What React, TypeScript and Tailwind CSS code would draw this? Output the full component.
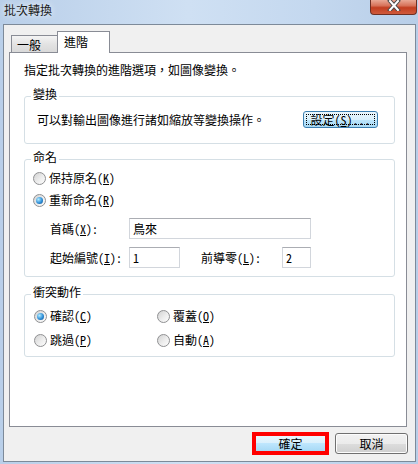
import type { ReactNode } from 'react';

function Radio({ checked }: { checked?: boolean }) {
  return (
    <span className="flex h-[13px] w-[13px] shrink-0 items-center justify-center rounded-full border border-[#8f9092] bg-[linear-gradient(135deg,#d2d2d2,#ededed_55%,#fdfdfd)]">
      {checked && (
        <span className="h-[7px] w-[7px] rounded-full bg-[radial-gradient(circle_at_35%_35%,#b3ecff,#2f8fd8_55%,#0c4a86)]" />
      )}
    </span>
  );
}

function RadioRow({ checked, children }: { checked?: boolean; children: ReactNode }) {
  return (
    <div className="flex h-[16px] items-center gap-[3px]">
      <Radio checked={checked} />
      <span>{children}</span>
    </div>
  );
}

function Group({ label, className, children }: { label: string; className?: string; children: ReactNode }) {
  return (
    <div className={'relative rounded-[3px] border border-[#d5dfe5] ' + (className ?? '')}>
      <span className="absolute -top-[10px] left-[6px] bg-white px-[2px] leading-[14px]">{label}</span>
      {children}
    </div>
  );
}

function Field({ value, className }: { value: string; className: string }) {
  return (
    <div className={'flex h-[21px] items-center border border-[#d2d6dc] border-t-[#abadb3] bg-white pl-[3px] ' + className}>
      {value}
    </div>
  );
}

export default function App() {
  return (
    <div className="flex h-[464px] w-[418px] flex-col overflow-hidden bg-[linear-gradient(90deg,#b9cfe9,#cfe0f3_45%,#c4d8ef_75%,#b8cee8)] pb-[2px] pl-[3px] pr-[2px] font-['Noto_Sans_CJK_TC','Noto_Sans',sans-serif] text-[12px] leading-[14px] text-black [font-feature-settings:'hwid']">
      {/* title bar */}
      <div className="flex h-[24px] shrink-0 items-start justify-between">
        <span className="pl-[1px] pt-[3px] text-[#1a1a1a] [text-shadow:0_0_6px_#ffffff]">批次轉換</span>
        <div className="-mr-[1px] flex h-[15px] w-[47px] items-center justify-center rounded-b-[4px] border border-t-0 border-[#6e2f23] bg-[linear-gradient(#e9a895,#d7735a_40%,#c23e20_55%,#cf5a3c)]">
          <svg width="14" height="11" viewBox="0 0 14 11" className="-mt-[3px]">
            <path d="M3 1 L11 10 M11 1 L3 10" stroke="#4a4a4a" strokeWidth="4" strokeLinecap="square" />
            <path d="M3 1 L11 10 M11 1 L3 10" stroke="#ffffff" strokeWidth="2" strokeLinecap="square" />
          </svg>
        </div>
      </div>

      {/* client area */}
      <div className="flex flex-1 flex-col border border-[#7d8a99] bg-[#f0f0f0] pt-[6px]">
        {/* tabs */}
        <div className="ml-[7px] flex h-[21px] items-end">
          <div className="h-[17px] w-[47px] border border-b-0 border-[#898c95] bg-[linear-gradient(#f4f4f4,#e3e3e3_50%,#d9d9d9)] pl-[5px] pt-[2px]">
            一般
          </div>
          <div className="relative z-10 -mb-[1px] -ml-[1px] h-[22px] w-[53px] border border-b-0 border-[#898c95] bg-white pl-[6px] pt-[3px]">
            進階
          </div>
        </div>

        {/* panel */}
        <div className="ml-[5px] h-[375px] w-[398px] border border-[#898c95] bg-white pl-[14px] pr-[11px] pt-[10px]">
          <p>指定批次轉換的進階選項，如圖像變換。</p>

          <Group label="變換" className="mt-[19px] pb-[15px] pl-[12px] pr-[16px] pt-[14px]">
            <div className="flex h-[17px] items-center">
              <span>可以對輸出圖像進行諸如縮放等變換操作。</span>
              <button
                type="button"
                className="relative ml-auto h-[17px] w-[75px] rounded-[3px] border border-[#3c7fb1] bg-[linear-gradient(#eaf6fd,#d9f0fc_50%,#bee6fd_50%,#a7d9f5)] leading-[14px]"
              >
                <span className="absolute inset-[2px] border border-dotted border-black" />
                設定(<u className="underline-offset-1">S</u>)...
              </button>
            </div>
          </Group>

          <Group label="命名" className="mt-[15px] pb-[8px] pl-[8px] pt-[10px]">
            <RadioRow>
              保持原名(<u>K</u>)
            </RadioRow>
            <div className="mt-[6px]">
              <RadioRow checked>
                重新命名(<u>R</u>)
              </RadioRow>
            </div>
            <div className="mt-[10px] flex items-center pl-[17px]">
              <span className="w-[79px]">
                首碼(<u>X</u>):
              </span>
              <Field value="鳥來" className="w-[182px]" />
            </div>
            <div className="mt-[8px] flex items-center pl-[17px]">
              <span className="w-[79px]">
                起始編號(<u>I</u>):
              </span>
              <Field value="1" className="w-[51px]" />
              <span className="ml-[21px] w-[81px]">
                前導零(<u>L</u>):
              </span>
              <Field value="2" className="w-[29px]" />
            </div>
          </Group>

          <Group label="衝突動作" className="mt-[17px] pb-[8px] pl-[9px] pt-[13px]">
            <div className="grid grid-cols-[123px_1fr] gap-y-[8px]">
              <RadioRow checked>
                確認(<u>C</u>)
              </RadioRow>
              <RadioRow>
                覆蓋(<u>O</u>)
              </RadioRow>
              <RadioRow>
                跳過(<u>P</u>)
              </RadioRow>
              <RadioRow>
                自動(<u>A</u>)
              </RadioRow>
            </div>
          </Group>
        </div>

        {/* buttons */}
        <div className="mt-[5px] flex h-[23px] items-center justify-end gap-[6px] pr-[7px]">
          <button
            type="button"
            className="h-[23px] w-[77px] border-[4px] border-[#ff0000] bg-[linear-gradient(#eaf6fd,#d9f0fc_50%,#bee6fd_50%,#a7d9f5)] leading-[14px]"
          >
            確定
          </button>
          <button
            type="button"
            className="h-[21px] w-[73px] rounded-[3px] border border-[#707070] bg-[linear-gradient(#f2f2f2,#ebebeb_50%,#dddddd_50%,#cfcfcf)] leading-[14px] shadow-[inset_0_0_0_1px_#fcfcfc]"
          >
            取消
          </button>
        </div>
      </div>
    </div>
  );
}
